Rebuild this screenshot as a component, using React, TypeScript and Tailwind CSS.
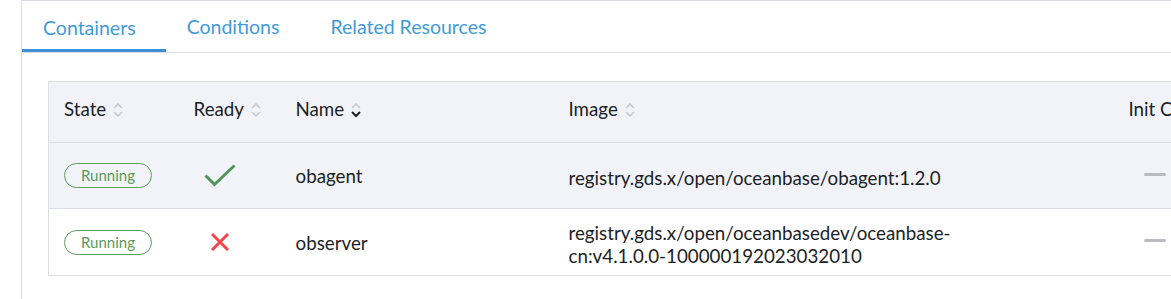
type Row = {
  name: string
  image: string
  ready: boolean
  hovered?: boolean
}

const rows: Row[] = [
  { name: 'obagent', image: 'registry.gds.x/open/oceanbase/obagent:1.2.0', ready: true, hovered: true },
  { name: 'observer', image: 'registry.gds.x/open/oceanbasedev/oceanbase-cn:v4.1.0.0-100000192023032010', ready: false },
]

function SortIcon({ active }: { active?: boolean }) {
  return (
    <svg width="12" height="18" viewBox="0 0 12 18" className="ml-[6px] shrink-0">
      <path d="M2 7 L6 3 L10 7" fill="none" stroke="#c4c6cc" strokeWidth="1.5" />
      <path d="M2 11 L6 15 L10 11" fill="none" stroke={active ? '#1c1e26' : '#c4c6cc'} strokeWidth={active ? 2 : 1.5} />
    </svg>
  )
}

function HeaderCell({ label, active }: { label: string; active?: boolean }) {
  return (
    <th className="pb-[5px] pl-[15px] text-left font-normal">
      <div className="flex items-center whitespace-nowrap">
        <span>{label}</span>
        {label !== 'Init Containers' && <SortIcon active={active} />}
      </div>
    </th>
  )
}

function ReadyIcon({ ready }: { ready: boolean }) {
  if (ready) {
    return (
      <svg width="32" height="23" viewBox="0 0 32 23">
        <path d="M1.5 11.5 L10.5 20.5 L30.5 1.5" fill="none" stroke="#4f955a" strokeWidth="3" />
      </svg>
    )
  }
  return (
    <svg width="20" height="18" viewBox="0 0 20 18">
      <path d="M2 1 L18 17 M18 1 L2 17" fill="none" stroke="#f0474b" strokeWidth="3" />
    </svg>
  )
}

export default function App() {
  return (
    <div
      className="h-[299px] w-[1171px] overflow-hidden bg-white pl-[21px]"
      style={{ fontFamily: 'Lato, "Open Sans", sans-serif' }}
    >
      <div className="h-full border-l border-t border-[#dcdee5]">
        <div className="flex h-[52px] items-stretch border-b border-[#dcdee5] text-[19.5px] text-[#3f9bd9]">
          <div className="flex items-center border-b-[3px] border-[#3c90d6] pl-[21px] pr-[30px] pt-[5px]">
            Containers
          </div>
          <div className="flex items-center pl-[21px] pr-[30px] pt-[1px]">Conditions</div>
          <div className="flex items-center pl-[21px] pr-[30px] pt-[1px]">Related Resources</div>
        </div>

        <div className="pl-[26px] pt-[28px]">
          <table className="w-[1300px] table-fixed border-collapse border border-[#dcdee5] text-[18.75px] text-[#1c1e26]">
            <colgroup>
              <col className="w-[130px]" />
              <col className="w-[102px]" />
              <col className="w-[273px]" />
              <col className="w-[560px]" />
              <col />
            </colgroup>
            <thead>
              <tr className="h-[61px] border-b border-[#dcdee5] bg-[#f2f3f8]">
                <HeaderCell label="State" />
                <HeaderCell label="Ready" />
                <HeaderCell label="Name" active />
                <HeaderCell label="Image" />
                <HeaderCell label="Init Containers" />
              </tr>
            </thead>
            <tbody>
              {rows.map((r, i) => (
                <tr
                  key={r.name}
                  className={`${i === 0 ? 'h-[66px]' : 'h-[67px]'} border-b border-[#dcdee5] ${r.hovered ? 'bg-[#f2f3f8]' : 'bg-white'}`}
                >
                  <td className="pb-[2px] pl-[15px]">
                    <span className="inline-flex h-[25px] w-[88px] items-center justify-center rounded-full border border-[#5d9e61] text-[15px] text-[#5b9a5e]">
                      Running
                    </span>
                  </td>
                  <td className="pl-[15px]">
                    <div className="flex w-[52px] justify-center">
                      <ReadyIcon ready={r.ready} />
                    </div>
                  </td>
                  <td className="pl-[15px] pt-[2px]">{r.name}</td>
                  <td className="pl-[15px]">
                    <div className="max-w-[400px] pt-[3px] leading-[23px] [overflow-wrap:anywhere]">{r.image}</div>
                  </td>
                  <td className="pb-[3px] pl-[15px]">
                    <div className="ml-[15px] h-[3px] w-[22px] rounded-full bg-[#b9bbc0]" />
                  </td>
                </tr>
              ))}
            </tbody>
          </table>
        </div>
      </div>
    </div>
  )
}
